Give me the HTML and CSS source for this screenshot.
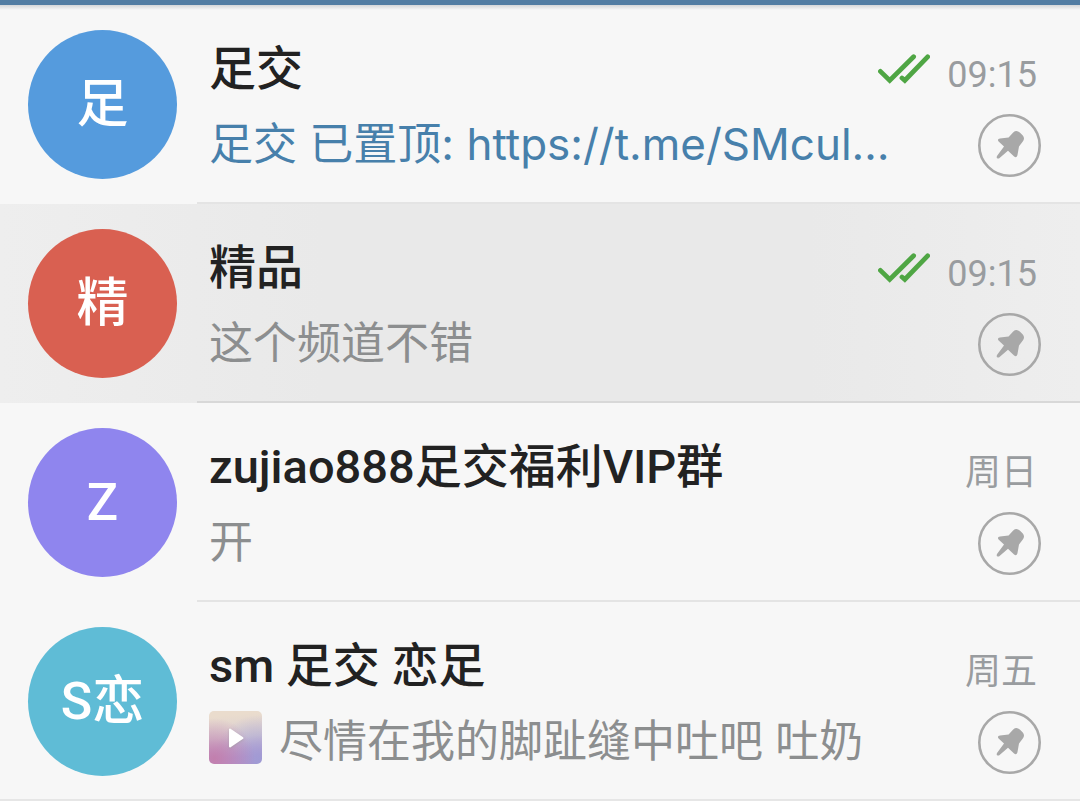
FILE: index.html
```
<!DOCTYPE html>
<html lang="zh-CN">
<head>
  <meta charset="UTF-8">
  <meta name="viewport" content="width=device-width, initial-scale=1.0">
  <title>Chats</title>
  <link rel="stylesheet" href="styles.css">
</head>
<body>

<svg class="sprite" aria-hidden="true">
  <symbol id="checks" viewBox="0 0 52 30">
    <path d="M2.4 17.4 L11.7 26.4 L35.6 2.8 M24 24 L26.8 26.4 L49.6 2.8" fill="none" stroke="#4fa644" stroke-width="4.8" stroke-linecap="round" stroke-linejoin="miter"/>
  </symbol>
  <symbol id="pin" viewBox="0 0 63 63">
    <circle cx="31.5" cy="31.5" r="30.2" fill="none" stroke="#a8a8a8" stroke-width="2.6"/>
    <path d="M35.2 18.4 Q38.6 15.6 41.8 18.6 L44.8 21.6 Q47.2 24.4 44.8 27.6 L41 32.4 L39.4 41.6 Q38.4 44.4 35.8 42.2 L30 36.8 L21 44.4 Q17.8 45.2 19 42 L26 32.4 L20.6 27.6 Q18.8 24.8 22 24.4 L30.6 23.4 Z" fill="#a8a8a8"/>
  </symbol>
</svg>

<header class="topbar"></header>

<main class="chats">
  <article class="chat">
    <div class="avatar blue">足</div>
    <div class="body">
      <div class="line">
        <h2 class="name">足交</h2>
        <svg class="checks"><use href="#checks"/></svg>
        <time class="time">09:15</time>
      </div>
      <div class="line">
        <p class="message service">足交 已置顶: https://t.me/SMcul…</p>
        <svg class="pin"><use href="#pin"/></svg>
      </div>
    </div>
  </article>

  <article class="chat active">
    <div class="avatar red">精</div>
    <div class="body">
      <div class="line">
        <h2 class="name">精品</h2>
        <svg class="checks"><use href="#checks"/></svg>
        <time class="time">09:15</time>
      </div>
      <div class="line">
        <p class="message">这个频道不错</p>
        <svg class="pin"><use href="#pin"/></svg>
      </div>
    </div>
  </article>

  <article class="chat">
    <div class="avatar violet">Z</div>
    <div class="body">
      <div class="line">
        <h2 class="name">zujiao888足交福利VIP群</h2>
        <time class="time">周日</time>
      </div>
      <div class="line">
        <p class="message">开</p>
        <svg class="pin"><use href="#pin"/></svg>
      </div>
    </div>
  </article>

  <article class="chat">
    <div class="avatar cyan">S恋</div>
    <div class="body">
      <div class="line">
        <h2 class="name">sm 足交 恋足</h2>
        <time class="time">周五</time>
      </div>
      <div class="line">
        <div class="thumb">
          <svg class="play" viewBox="0 0 16 20"><path d="M2 1.5 L14.5 10 L2 18.5 Z" fill="#fff" stroke="#fff" stroke-width="2" stroke-linejoin="round"/></svg>
        </div>
        <p class="message">尽情在我的脚趾缝中吐吧 吐奶</p>
        <svg class="pin"><use href="#pin"/></svg>
      </div>
    </div>
  </article>
</main>

</body>
</html>
```
FILE: styles.css
```
* {
  box-sizing: border-box;
}
body {
  margin: 0;
  background: #fff;
  font-family: Roboto, "Noto Sans CJK SC", sans-serif;
}
.sprite {
  display: none;
}
.topbar {
  height: 5px;
  background: #527da3;
}
.chats {
  background: linear-gradient(#d4d6d8, #f7f7f7 5px);
  border-bottom: 2px solid #e6e6e6;
}
.chat {
  display: flex;
  height: 199px;
  padding-left: 28px;
}
.active {
  background: linear-gradient(90deg, #eeeeee, #e9e9e9 30%, #e9e9e9 75%, #eeeeee);
}
.chat:last-child {
  height: 197px;
}
.avatar {
  width: 149px;
  height: 149px;
  margin: 25px 20px 0 0;
  border-radius: 50%;
  flex-shrink: 0;
  color: #fff;
  font-size: 52px;
  font-weight: 500;
  line-height: 149px;
  text-align: center;
}
.blue {
  background: #559bdd;
}
.red {
  background: #d96051;
}
.violet {
  background: #8f85ee;
}
.cyan {
  background: #5fbcd6;
}
.body {
  flex: 1;
  min-width: 0;
  padding: 34px 39px 0 12px;
  border-bottom: 2px solid #e4e4e4;
}
.active .body {
  border-color: #d8d8d8;
}
.chat:last-child .body {
  border-bottom: none;
}
.line {
  display: flex;
  height: 60px;
  margin-bottom: 15px;
}
.name {
  flex: 1;
  margin: 0;
  color: #222;
  font-size: 47px;
  font-weight: 500;
  line-height: 60px;
  white-space: nowrap;
}
.checks {
  width: 52px;
  height: 30px;
  margin: 15px 17px 0 0;
}
.time {
  padding: 6px 4px 0 0;
  color: #999c9f;
  font-size: 36px;
  line-height: 60px;
}
.message {
  flex: 1;
  min-width: 0;
  margin: 0;
  color: #8c8e8f;
  font-family: Inter, "Noto Sans CJK SC", sans-serif;
  font-size: 44px;
  line-height: 60px;
  white-space: nowrap;
}
.service {
  color: #4780ab;
}
.pin {
  width: 63px;
  height: 63px;
  flex-shrink: 0;
}
.thumb {
  display: flex;
  align-items: center;
  justify-content: center;
  width: 53px;
  height: 53px;
  margin-right: 17px;
  border-radius: 5px;
  flex-shrink: 0;
  background:
    radial-gradient(circle at 10% 90%, #c27fad, transparent 60%),
    radial-gradient(circle at 95% 95%, #9f9bd4, transparent 65%),
    linear-gradient(175deg, #eadccd 10%, #d9cfd3 50%, #b895d0 85%);
}
.play {
  width: 16px;
  height: 20px;
  filter: drop-shadow(0 1px 1px #9998);
}
```
